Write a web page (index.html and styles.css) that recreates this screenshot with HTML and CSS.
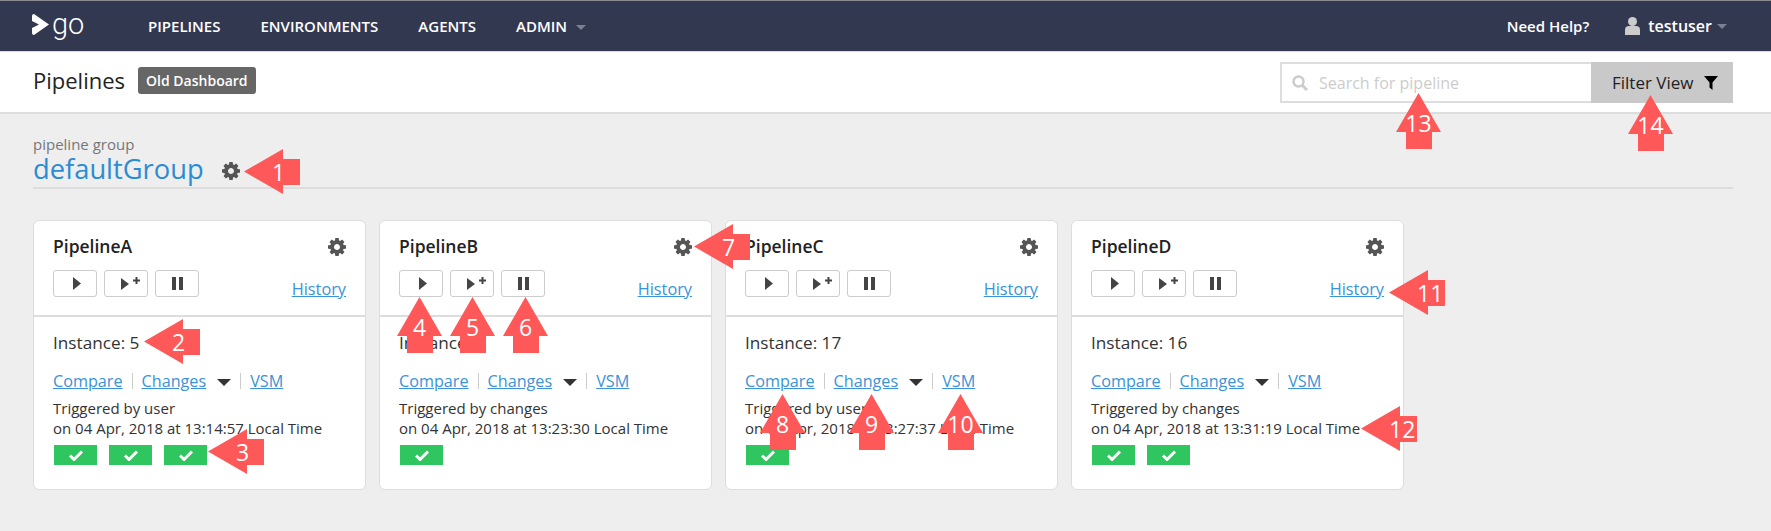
FILE: index.html
```html
<!DOCTYPE html>
<html>
<head>
  <meta charset="UTF-8">
  <title>Pipelines</title>
  <link rel="stylesheet" href="styles.css">
</head>
<body>

  <svg class="defs" width="0" height="0">
    <symbol id="gear" viewBox="128 128 1536 1536"><path d="M1152 896q0-106-75-181t-181-75-181 75-75 181 75 181 181 75 181-75 75-181zm512-109v222q0 12-8 23t-19 13l-186 28q-14 46-39 92 40 57 107 138 10 12 10 24 0 10-9 23-26 36-98.500 107.500t-94.500 71.500q-13 0-26-10l-138-107q-44 23-91 38-16 136-29 186-7 28-36 28h-222q-14 0-24.500-8.500t-11.500-21.500l-28-184q-49-16-90-37l-142 107q-9 9-24 9-13 0-25-10-129-119-165-170-7-8-7-22 0-12 8-23 15-21 51-66.500t54-70.500q-26-50-41-98l-183-28q-13-2-21-12.500t-8-23.500v-222q0-12 8-23t19-13l186-28q14-46 39-92-40-57-107-138-10-12-10-24 0-10 9-23 26-36 98.500-107.500t94.500-71.500q13 0 26 10l138 107q44-23 91-38 16-136 29-186 7-28 36-28h222q14 0 24.500 8.500t11.500 21.500l28 184q49 16 90 37l142-107q9-9 24-9 13 0 25 10 129 119 165 170 7 8 7 22 0 12-8 23-15 21-51 66.500t-54 70.500q26 50 41 98l183 28q13 2 21 12.500t8 23.500z"/></symbol>
    <symbol id="play" viewBox="0 0 8 13"><polygon points="0,0 8,6.500 0,13"/></symbol>
    <symbol id="play-plus" viewBox="0 0 19 13"><polygon points="0,1 8,7 0,13"/><path d="M12 2.500h2.500V0h2v2.500H19v2h-2.500V7h-2V4.500H12z"/></symbol>
    <symbol id="pause" viewBox="0 0 11 13"><rect width="4" height="13"/><rect x="7" width="4" height="13"/></symbol>
    <symbol id="check" viewBox="0 0 14 11"><path d="M1 5.500l4 4 8-8" fill="none" stroke="#fff" stroke-width="3"/></symbol>
  </svg>

  <nav class="topnav">
    <div class="logo">
      <svg class="logo-mark" viewBox="0 0 17 21"><path d="M2 0l15 10.500L2 21q-2 0-2-2v-5l7-3.500L0 7V2q0-2 2-2z" fill="#fff"/></svg>
      <span class="logo-text">go</span>
    </div>
    <ul class="nav-links">
      <li>PIPELINES</li>
      <li>ENVIRONMENTS</li>
      <li>AGENTS</li>
      <li>ADMIN <span class="caret"></span></li>
    </ul>
    <div class="nav-right">
      <span class="help">Need Help?</span>
      <svg class="user-icon" viewBox="0 0 15 18"><circle cx="7.500" cy="4.500" r="4.500" fill="#ccc"/><path d="M0 18v-5q0-4 4-4h7q4 0 4 4v5z" fill="#ccc"/></svg>
      <span class="username">testuser</span>
      <span class="caret"></span>
    </div>
  </nav>

  <header class="subheader">
    <h1>Pipelines</h1>
    <span class="badge">Old Dashboard</span>
    <div class="search-group">
      <div class="search-box">
        <svg class="search-icon" viewBox="0 0 16 16"><circle cx="6.500" cy="6.500" r="5" fill="none" stroke="#ccc" stroke-width="2.500"/><path d="M10.500 10.500l4.500 4.500" stroke="#ccc" stroke-width="3"/></svg>
        <span>Search for pipeline</span>
      </div>
      <div class="filter-btn">
        <span>Filter View</span>
        <svg class="funnel" viewBox="0 0 14 14"><path d="M0 0h14L8.500 6.500V14l-3-2.500v-5z"/></svg>
      </div>
    </div>
  </header>

  <main class="content">
    <div class="group-head">
      <div class="group-label">pipeline group</div>
      <div class="group-title">
        <span class="group-name">defaultGroup</span>
        <svg class="gear"><use href="#gear"/></svg>
      </div>
    </div>

    <div class="cards">
      <section class="card">
        <div class="card-top">
          <div class="card-title"><span>PipelineA</span><svg class="gear"><use href="#gear"/></svg></div>
          <div class="card-actions">
            <span class="btn"><svg class="ic-play"><use href="#play"/></svg></span>
            <span class="btn"><svg class="ic-plus"><use href="#play-plus"/></svg></span>
            <span class="btn"><svg class="ic-pause"><use href="#pause"/></svg></span>
            <a class="history">History</a>
          </div>
        </div>
        <div class="card-body">
          <div class="instance">Instance: 5</div>
          <div class="links"><a>Compare</a><i></i><a>Changes</a><b></b><i></i><a>VSM</a></div>
          <p class="trigger">Triggered by user<br>on 04 Apr, 2018 at 13:14:57 Local Time</p>
          <div class="stages">
            <span class="stage"><svg><use href="#check"/></svg></span>
            <span class="stage"><svg><use href="#check"/></svg></span>
            <span class="stage"><svg><use href="#check"/></svg></span>
          </div>
        </div>
      </section>

      <section class="card">
        <div class="card-top">
          <div class="card-title"><span>PipelineB</span><svg class="gear"><use href="#gear"/></svg></div>
          <div class="card-actions">
            <span class="btn"><svg class="ic-play"><use href="#play"/></svg></span>
            <span class="btn"><svg class="ic-plus"><use href="#play-plus"/></svg></span>
            <span class="btn"><svg class="ic-pause"><use href="#pause"/></svg></span>
            <a class="history">History</a>
          </div>
        </div>
        <div class="card-body">
          <div class="instance">Instance: 6</div>
          <div class="links"><a>Compare</a><i></i><a>Changes</a><b></b><i></i><a>VSM</a></div>
          <p class="trigger">Triggered by changes<br>on 04 Apr, 2018 at 13:23:30 Local Time</p>
          <div class="stages">
            <span class="stage"><svg><use href="#check"/></svg></span>
          </div>
        </div>
      </section>

      <section class="card">
        <div class="card-top">
          <div class="card-title"><span>PipelineC</span><svg class="gear"><use href="#gear"/></svg></div>
          <div class="card-actions">
            <span class="btn"><svg class="ic-play"><use href="#play"/></svg></span>
            <span class="btn"><svg class="ic-plus"><use href="#play-plus"/></svg></span>
            <span class="btn"><svg class="ic-pause"><use href="#pause"/></svg></span>
            <a class="history">History</a>
          </div>
        </div>
        <div class="card-body">
          <div class="instance">Instance: 17</div>
          <div class="links"><a>Compare</a><i></i><a>Changes</a><b></b><i></i><a>VSM</a></div>
          <p class="trigger">Triggered by user<br>on 04 Apr, 2018 at 13:27:37 Local Time</p>
          <div class="stages">
            <span class="stage"><svg><use href="#check"/></svg></span>
          </div>
        </div>
      </section>

      <section class="card">
        <div class="card-top">
          <div class="card-title"><span>PipelineD</span><svg class="gear"><use href="#gear"/></svg></div>
          <div class="card-actions">
            <span class="btn"><svg class="ic-play"><use href="#play"/></svg></span>
            <span class="btn"><svg class="ic-plus"><use href="#play-plus"/></svg></span>
            <span class="btn"><svg class="ic-pause"><use href="#pause"/></svg></span>
            <a class="history">History</a>
          </div>
        </div>
        <div class="card-body">
          <div class="instance">Instance: 16</div>
          <div class="links"><a>Compare</a><i></i><a>Changes</a><b></b><i></i><a>VSM</a></div>
          <p class="trigger">Triggered by changes<br>on 04 Apr, 2018 at 13:31:19 Local Time</p>
          <div class="stages">
            <span class="stage"><svg><use href="#check"/></svg></span>
            <span class="stage"><svg><use href="#check"/></svg></span>
          </div>
        </div>
      </section>
    </div>
  </main>

  <!-- callout arrows drawn on top of the screenshot -->
  <div class="arrow left a1">1</div>
  <div class="arrow left a2">2</div>
  <div class="arrow left a3">3</div>
  <div class="arrow up a4">4</div>
  <div class="arrow up a5">5</div>
  <div class="arrow up a6">6</div>
  <div class="arrow left a7">7</div>
  <div class="arrow up a8">8</div>
  <div class="arrow up a9">9</div>
  <div class="arrow up a10">10</div>
  <div class="arrow left a11">11</div>
  <div class="arrow left a12">12</div>
  <div class="arrow up a13">13</div>
  <div class="arrow up a14">14</div>

</body>
</html>
```

FILE: styles.css
```css
* {
  box-sizing: border-box;
}

html, body {
  margin: 0;
  height: 531px;
  overflow: hidden;
}

body {
  position: relative;
  background-color: #eee;
  font-family: "Open Sans", "Liberation Sans", sans-serif;
  color: #333;
}

.defs {
  position: absolute;
}

/* top bar */
.topnav {
  display: flex;
  align-items: center;
  height: 52px;
  padding-left: 32px;
  background-color: #333851;
  border-top: 1px solid #8a8a92;
  border-bottom: 1px solid #ddd;
  color: #fff;
  font-size: 15px;
  font-weight: 600;
}

.logo {
  display: flex;
  align-items: center;
  width: 116px;
}

.logo-mark {
  width: 17px;
  height: 21px;
  margin-top: -3px;
}

.logo-text {
  margin-left: 3px;
  margin-top: -5px;
  font-family: Roboto, "Open Sans", sans-serif;
  font-size: 29px;
  font-weight: 300;
  line-height: 34px;
}

.nav-links {
  display: flex;
  gap: 40px;
  margin: 0;
  padding: 0;
  list-style: none;
}

.caret {
  display: inline-block;
  width: 0;
  height: 0;
  margin-left: 5px;
  border-left: 5px solid transparent;
  border-right: 5px solid transparent;
  border-top: 5px solid #7c8092;
  vertical-align: middle;
}

.nav-right {
  display: flex;
  align-items: center;
  margin-left: auto;
  padding-right: 44px;
}

.username {
  font-size: 16px;
}

.user-icon {
  width: 15px;
  height: 18px;
  margin-left: 36px;
  margin-right: 8px;
}

/* sub header */
.subheader {
  display: flex;
  align-items: center;
  height: 62px;
  padding: 0 38px 4px 33px;
  background-color: #fff;
  border-bottom: 2px solid #ddd;
}

.subheader h1 {
  margin: 0 13px 0 0;
  font-size: 22px;
  font-weight: 500;
  color: #222;
}

.badge {
  padding: 4px 8px;
  background-color: #666;
  border-radius: 3px;
  color: #fff;
  font-size: 14px;
  font-weight: 600;
  line-height: 19px;
}

.search-group {
  display: flex;
  height: 41px;
  margin-left: auto;
  margin-top: 5px;
}

.search-box {
  display: flex;
  align-items: center;
  width: 311px;
  padding-left: 10px;
  border: 2px solid #ddd;
  border-right: none;
  color: #ccc;
  font-size: 16px;
}

.search-icon {
  width: 16px;
  height: 16px;
  margin-right: 11px;
}

.filter-btn {
  display: flex;
  align-items: center;
  width: 142px;
  padding-left: 21px;
  background-color: #c9c9c9;
  color: #222;
  font-size: 17px;
}

.funnel {
  width: 14px;
  height: 14px;
  margin-left: 11px;
}

/* pipeline group */
.content {
  padding: 20px 38px 0 33px;
}

.group-head {
  border-bottom: 2px solid #ddd;
  padding-bottom: 1px;
}

.group-label {
  font-size: 15px;
  line-height: 20px;
  color: #777;
}

.group-title {
  display: flex;
  align-items: center;
}

.group-name {
  font-size: 27.300px;
  line-height: 32px;
  margin-top: -1px;
  padding-bottom: 1px;
  color: #2a8cd4;
}

.group-title .gear {
  margin-left: 18px;
  margin-top: 2px;
}

.gear {
  width: 18px;
  height: 18px;
  fill: #555;
}

/* cards */
.cards {
  display: flex;
  gap: 13px;
  margin-top: 31px;
}

.card {
  width: 333px;
  height: 270px;
  background-color: #fff;
  border: 1px solid #ddd;
  border-radius: 6px;
}

.card-top {
  height: 96px;
  padding: 14px 19px 0;
  border-bottom: 2px solid #ddd;
}

.card-title {
  display: flex;
  justify-content: space-between;
  align-items: center;
  height: 22px;
  font-size: 17.500px;
  font-weight: 600;
  color: #222;
}

.card-title .gear {
  margin-top: 2px;
}

.card-actions {
  display: flex;
  gap: 7px;
  margin-top: 13px;
}

.btn {
  display: flex;
  align-items: center;
  justify-content: center;
  width: 44px;
  height: 27px;
  border: 1px solid #ccc;
  border-radius: 3px;
}

.btn svg {
  fill: #444;
}

.ic-play {
  width: 8px;
  height: 13px;
  margin-left: 4px;
}

.ic-plus {
  width: 19px;
  height: 13px;
  margin-left: 8px;
}

.ic-pause {
  width: 11px;
  height: 13px;
}

.history {
  margin-left: auto;
  margin-top: 8px;
  font-size: 16.300px;
}

a {
  color: #3a93d6;
  text-decoration: underline;
}

.card-body {
  padding: 14px 19px 0;
}

.instance {
  font-size: 17.200px;
  line-height: 24px;
}

.links {
  display: flex;
  align-items: center;
  margin-top: 15px;
  font-size: 16.200px;
  line-height: 22px;
}

.links i {
  width: 1px;
  height: 16px;
  margin: 0 9px;
  background-color: #ccc;
}

.links b {
  width: 0;
  height: 0;
  margin-left: 11px;
  border-left: 7px solid transparent;
  border-right: 7px solid transparent;
  border-top: 7px solid #333;
  margin-top: 2px;
}

.trigger {
  margin: 6px 0 0;
  font-size: 15px;
  line-height: 20px;
}

.stages {
  display: flex;
  gap: 12px;
  margin-top: 7px;
  margin-left: 1px;
}

.stage {
  display: flex;
  align-items: center;
  justify-content: center;
  width: 43px;
  height: 20px;
  background-color: #2fc65f;
}

.stage svg {
  width: 14px;
  height: 11px;
}

/* callouts */
.arrow {
  position: absolute;
  display: flex;
  align-items: center;
  color: #fff;
  font-size: 23px;
  background-color: #ff5858;
}

.arrow.left {
  width: 56px;
  height: 45px;
  padding-left: 28px;
  clip-path: polygon(0 50%, 39px 0, 39px 10px, 100% 10px, 100% 36px, 39px 36px, 39px 100%);
}

.arrow.up {
  width: 45px;
  height: 56px;
  justify-content: center;
  padding-top: 4px;
  clip-path: polygon(50% 0, 100% 39px, 36px 39px, 36px 100%, 10px 100%, 10px 39px, 0 39px);
}

.a1 { left: 244px; top: 149px; }
.a2 { left: 144px; top: 319px; }
.a3 { left: 208px; top: 429px; }
.a4 { left: 397px; top: 297px; }
.a5 { left: 450px; top: 297px; }
.a6 { left: 503px; top: 297px; }
.a7 { left: 694px; top: 224px; }
.a8 { left: 760px; top: 394px; }
.a9 { left: 849px; top: 394px; }
.a10 { left: 938px; top: 394px; }
.a11 { left: 1389px; top: 270px; }
.a12 { left: 1361px; top: 406px; }
.a13 { left: 1396px; top: 93px; }
.a14 { left: 1628px; top: 95px; }
```
